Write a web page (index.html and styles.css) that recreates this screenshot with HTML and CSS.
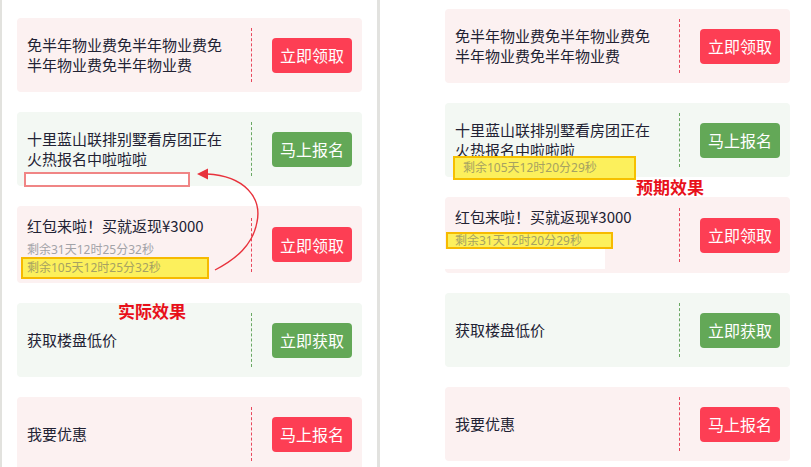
FILE: index.html
```html
<!DOCTYPE html>
<html lang="zh-CN">
  <head>
    <meta charset="UTF-8" />
    <title>活动卡片 倒计时效果对比</title>
    <link rel="stylesheet" href="styles.css">
  </head>
  <body>
    <div class="page">
      <!-- 实际效果 -->
      <div class="panel panel-actual">
        <div class="card card-red">
          <div class="card-text">免半年物业费免半年物业费免半年物业费免半年物业费</div>
          <div class="card-side"><button class="btn btn-red">立即领取</button></div>
        </div>

        <div class="card card-green">
          <div class="card-text">十里蓝山联排别墅看房团正在火热报名中啦啦啦</div>
          <div class="card-side"><button class="btn btn-green">马上报名</button></div>
          <div class="empty-mark"></div>
        </div>

        <div class="card card-red">
          <div class="card-text">
            <div class="title">红包来啦！买就返现¥3000</div>
            <div class="countdown">剩余31天12时25分32秒</div>
            <div class="countdown countdown-hl hl-actual">剩余105天12时25分32秒</div>
          </div>
          <div class="card-side"><button class="btn btn-red">立即领取</button></div>
        </div>

        <div class="card card-green">
          <div class="card-text">获取楼盘低价</div>
          <div class="card-side"><button class="btn btn-green">立即获取</button></div>
        </div>

        <div class="card card-red">
          <div class="card-text">我要优惠</div>
          <div class="card-side"><button class="btn btn-red">马上报名</button></div>
        </div>
      </div>

      <!-- 预期效果 -->
      <div class="panel panel-expected">
        <div class="card card-red">
          <div class="card-text">免半年物业费免半年物业费免半年物业费免半年物业费</div>
          <div class="card-side"><button class="btn btn-red">立即领取</button></div>
        </div>

        <div class="card card-green">
          <div class="card-text">十里蓝山联排别墅看房团正在火热报名中啦啦啦</div>
          <div class="card-side"><button class="btn btn-green">马上报名</button></div>
          <div class="countdown-float">剩余105天12时20分29秒</div>
        </div>

        <div class="card card-red">
          <div class="card-text">
            <div class="title">红包来啦！买就返现¥3000</div>
            <div class="countdown countdown-hl hl-expected">剩余31天12时20分29秒</div>
            <div class="blank-patch"></div>
          </div>
          <div class="card-side"><button class="btn btn-red">立即领取</button></div>
        </div>

        <div class="card card-green">
          <div class="card-text">获取楼盘低价</div>
          <div class="card-side"><button class="btn btn-green">立即获取</button></div>
        </div>

        <div class="card card-red">
          <div class="card-text">我要优惠</div>
          <div class="card-side"><button class="btn btn-red">马上报名</button></div>
        </div>
      </div>

      <svg class="arrow" width="811" height="467" viewBox="0 0 811 467">
        <path d="M207 174 C 245 176, 262 198, 257 222 C 253 245, 236 259, 215 270" fill="none" stroke="#e8323c" stroke-width="1.4" />
        <polygon points="197,174 208,168.5 208,179.5" fill="#e8323c" />
      </svg>
      <span class="note note-actual">实际效果</span>
      <span class="note note-expected">预期效果</span>
    </div>
  </body>
</html>
```

FILE: styles.css
```css
* {
  box-sizing: border-box;
}

body {
  margin: 0;
  padding: 0;
  background: #ffffff;
  font-family: "Noto Sans CJK SC", "Noto Sans", sans-serif;
  color: #222233;
  overflow: hidden;
}

.page {
  position: relative;
  display: flex;
  width: 811px;
  height: 467px;
  overflow: hidden;
}

.panel {
  flex: none;
}

.panel-actual {
  width: 380px;
  padding: 18px 15px 0 15px;
  border-left: 2px solid #e2e2de;
  border-right: 3px solid #e2e2df;
}

.panel-expected {
  width: 431px;
  padding: 9px 21px 0 65px;
}

.card {
  position: relative;
  display: flex;
  align-items: center;
  width: 345px;
  min-height: 74px;
  padding: 10px;
  margin-bottom: 20px;
  border-radius: 4px;
}

.card-red {
  background: #fcf1f1;
}

.card-green {
  background: #f3f8f3;
}

.card-text {
  flex: 1;
  padding-right: 20px;
  font-size: 15px;
  line-height: 20px;
}

.card-side {
  flex: none;
  display: flex;
  align-items: center;
  width: 101px;
  height: 54px;
  padding-left: 20px;
  border-left: 1px dashed #e8475c;
}

.card-green .card-side {
  border-left-color: #6aa863;
}

.btn {
  width: 80px;
  height: 35px;
  padding: 0;
  border: none;
  border-radius: 4px;
  font-family: inherit;
  font-size: 16px;
  color: #ffffff;
}

.btn-red {
  background: #fd3e54;
}

.btn-green {
  background: #63a857;
}

.countdown,
.countdown-float {
  font-family: "Noto Sans", "Noto Sans CJK SC", sans-serif;
  font-size: 12px;
}

.countdown {
  margin-top: 6px;
  line-height: 16px;
  color: #a3a3a8;
}

.countdown-hl {
  background: #fcf05c;
  border: 2px solid #f6ba00;
  color: #a6a262;
}

.hl-actual {
  width: 188px;
  height: 22px;
  margin: -1px 0 -6px -6px;
  padding-left: 4px;
  line-height: 18px;
}

.hl-expected {
  width: 167px;
  height: 17px;
  margin: 5px 0 0 -9px;
  padding-left: 7px;
  line-height: 13px;
}

.blank-patch {
  width: 163px;
  height: 20px;
  margin: 0 0 -6px -13px;
  background: #ffffff;
}

/* overlays: misplaced / expected countdown boxes */
.empty-mark {
  position: absolute;
  left: 7px;
  top: 60px;
  width: 166px;
  height: 15px;
  background: #ffffff;
  border: 2px solid #f08585;
}

.countdown-float {
  position: absolute;
  left: 8px;
  top: 53px;
  width: 183px;
  height: 24px;
  padding-left: 8px;
  background: #fcf05c;
  border: 2px solid #f6c000;
  line-height: 20px;
  color: #a6a262;
}

.arrow {
  position: absolute;
  left: 0;
  top: 0;
  pointer-events: none;
}

.note {
  position: absolute;
  font-size: 17px;
  line-height: 20px;
  font-weight: bold;
  color: #e8101a;
}

.note-actual {
  left: 118px;
  top: 301px;
}

.note-expected {
  left: 636px;
  top: 177px;
}
```
